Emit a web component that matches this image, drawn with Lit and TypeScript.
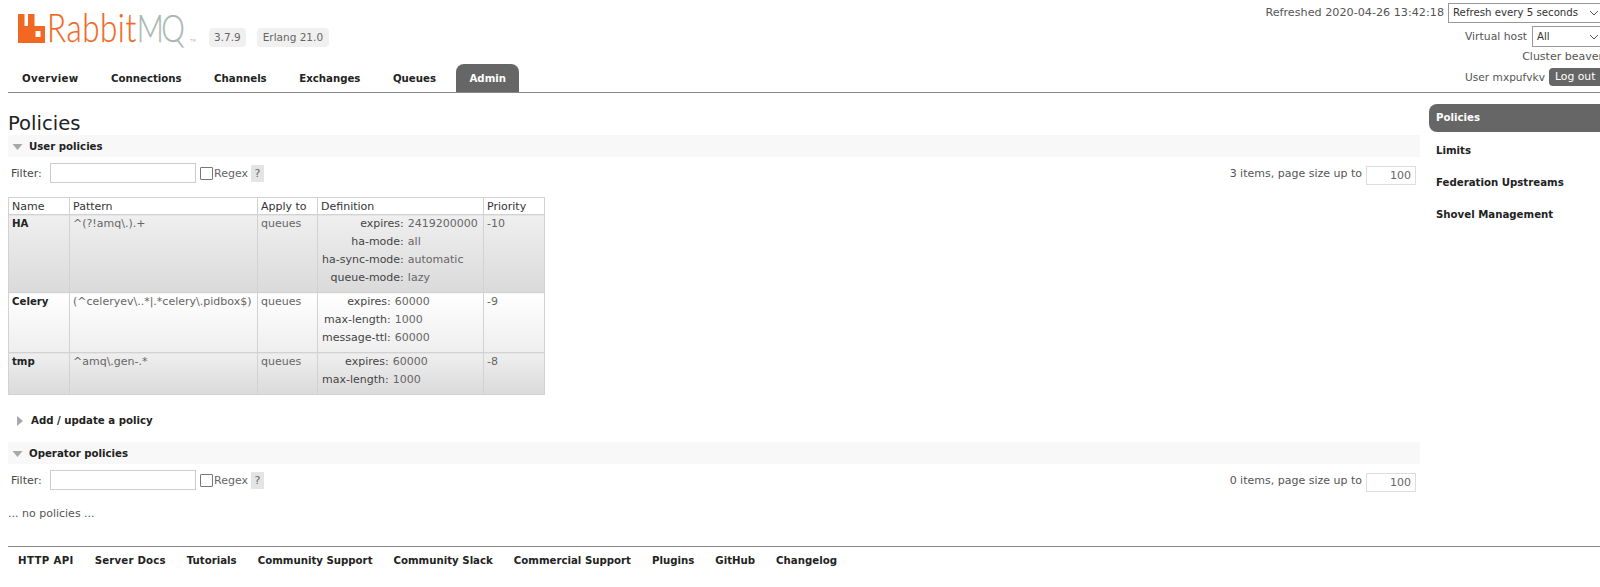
import { LitElement, html, css } from "lit";
import { customElement } from "lit/decorators.js";

const policies = [
  { name: "HA", pattern: "^(?!amq\\.).+", apply: "queues", prio: "-10", alt: "a", def: [["expires", "2419200000"], ["ha-mode", "all"], ["ha-sync-mode", "automatic"], ["queue-mode", "lazy"]] },
  { name: "Celery", pattern: "(^celeryev\\..*|.*celery\\.pidbox$)", apply: "queues", prio: "-9", alt: "b", def: [["expires", "60000"], ["max-length", "1000"], ["message-ttl", "60000"]] },
  { name: "tmp", pattern: "^amq\\.gen-.*", apply: "queues", prio: "-8", alt: "a", def: [["expires", "60000"], ["max-length", "1000"]] },
];
const tabs = ["Overview", "Connections", "Channels", "Exchanges", "Queues", "Admin"];
const side = ["Policies", "Limits", "Federation Upstreams", "Shovel Management"];
const foot = ["HTTP API", "Server Docs", "Tutorials", "Community Support", "Community Slack", "Commercial Support", "Plugins", "GitHub", "Changelog"];

@customElement("app-root")
export class AppRoot extends LitElement {
  static styles = css`
    :host { display: block; width: 1600px; height: 587px; overflow: hidden; background: #fff; color: #484848; font: 11px/18px "DejaVu Sans", Verdana, sans-serif; }
    * { box-sizing: border-box; }
    .header { height: 93px; margin-left: 8px; border-bottom: 1px solid #888; display: flex; position: relative; }
    .brand { width: 1100px; }
    .logo-row { display: flex; align-items: flex-start; height: 64px; }
    .logo { margin: 13px 0 0 10px; width: 185px; height: 30px; display: flex; align-items: flex-end; flex: none; position: relative; }
    .logo svg { display: block; width: 27px; height: 29px; flex: none; }
    .word { display: block; flex: none; margin-left: 2px; font: 300 38.500px/27px Lato, "Liberation Sans", sans-serif; white-space: nowrap; transform: scaleX(0.815); transform-origin: left center; color: #f26722; height: 29px; letter-spacing: 0.700px; -webkit-text-stroke: 0.250px #f26722; }
    .word b { font-weight: 300; font-size: 36.500px; color: #a9b7b1; letter-spacing: -3px; -webkit-text-stroke: 0.250px #a9b7b1; }
    .tm { position: absolute; left: 172px; top: 25px; font-size: 4px; line-height: 5px; color: #b5bfba; }
    .ver { margin: 28px 0 0 6px; background: #f0f0f0; border-radius: 4px; height: 19px; line-height: 19px; padding: 0 5px; color: #666; flex: none; font-size: 10.500px; }
    .ver + .ver { margin-left: 11px; padding: 0 6px; }
    .nav { display: flex; height: 28px; margin-left: 14px; font-weight: 700; font-size: 10.2px; color: #222; gap: 32.500px; }
    .nav span { line-height: 30px; height: 28px; }
    .nav span:first-child { letter-spacing: 0.350px; }
    .nav span.on { background: #666; color: #fff; border-radius: 8px 8px 0 0; margin-left: -12px; padding: 0 13px; }
    .login { margin-left: auto; margin-right: -3px; width: 366px; flex: none; display: flex; flex-direction: column; align-items: flex-end; padding-top: 3px; color: #555; }
    .login div { display: flex; align-items: center; justify-content: flex-end; white-space: nowrap; }
    .l1 { height: 20px; font-size: 11.2px; }
    .l2 { height: 21px; margin-top: 3px; font-size: 10.8px; }
    .l3 { height: 18px; margin-top: 1px; }
    .l4 { height: 18px; margin-top: 2px; font-size: 10.6px; }
    .sel { height: 100%; border: 1px solid #999; margin-left: 4px; padding-left: 4px; display: flex; align-items: center; justify-content: space-between; color: #333; background: #fff; font-size: 10.200px; }
    .sel svg { margin-right: 3px; }
    .sel.s1 { width: 155px; }
    .sel.s2 { width: 71px; margin-left: 5px; }
    .logout { background: #666; color: #fff; border-radius: 4px 0 0 4px; padding: 0 6px; height: 18px; line-height: 18px; width: 54px; margin-left: 4px; font-size: 10.8px; overflow: hidden; }
    .body { display: flex; align-items: flex-start; }
    .main { width: 1412px; margin-left: 8px; flex: none; }
    h1 { margin: 0; font-size: 19.6px; font-weight: 400; line-height: 25px; height: 42px; padding-top: 18px; color: #222; }
    .sec { height: 22px; background: #f8f8f8; display: flex; align-items: center; font-weight: 700; font-size: 10.2px; color: #222; padding-left: 4px; gap: 6px; padding-top: 1px; }
    .sec.closed { background: none; margin: 15px 0 11px; height: 21px; padding-left: 9px; gap: 8px; }
    .filter { display: flex; align-items: center; height: 21px; margin-top: 6px; padding-left: 3px; }
    .filter .lab { width: 39px; }
    .inp { width: 146px; height: 20px; border: 1px solid #ccc; background: #fff; margin-bottom: 1px; }
    .cb { width: 13px; height: 13px; border: 1px solid #777; margin-left: 4px; background: #fff; border-radius: 1px; }
    .rx { margin-left: 1px; color: #666; }
    .q { background: #e4e4e4; color: #666; width: 13px; height: 17px; line-height: 17px; text-align: center; margin-left: 3px; margin-bottom: 1px; }
    .count { margin-left: auto; color: #555; display: flex; align-items: center; }
    .size { width: 50px; height: 19px; margin: 3px 4px 0 4px; border: 1px solid #ddd; text-align: right; padding-right: 4px; line-height: 17px; color: #666; }
    table.list { border-collapse: collapse; margin-top: 13px; width: 536px; table-layout: fixed; }
    table.list > thead th { font-weight: 400; text-align: left; height: 17px; padding: 0 3px; border: 1px solid #d2d2d2; background: #fff; line-height: 15px; color: #333; }
    table.list > tbody > tr > td { border: 1px solid #d2d2d2; padding: 0 3px 5px; vertical-align: top; color: #666; }
    tr.a > td { background: linear-gradient(#efefef, #dadada); }
    tr.b > td { background: linear-gradient(#fff, #eeeeee); }
    td.nm { font-weight: 700; color: #222 !important; font-size: 10.2px; }
    table.def { border-collapse: collapse; }
    table.def th { font-weight: 400; text-align: right; padding: 0 4px 0 1px; color: #444; height: 18px; line-height: 18px; white-space: nowrap; }
    table.def td { padding: 0; color: #666; line-height: 18px; white-space: nowrap; }
    .none { margin-top: 14px; color: #555; }
    .side { width: 200px; margin-left: 9px; padding-top: 11px; flex: none; font-weight: 700; font-size: 10.2px; color: #222; }
    .side div { height: 32px; line-height: 30px; padding-left: 7px; }
    .side .on { background: #666; color: #fff; border-radius: 8px 0 0 8px; height: 28px; line-height: 28px; margin-bottom: 4px; }
    .footer { margin: 23px 0 0 8px; border-top: 1px solid #888; height: 28px; display: flex; padding-left: 10px; font-weight: 700; font-size: 10.2px; color: #222; line-height: 27px; gap: 21px; }
    .footer span:first-child { letter-spacing: 0.350px; }
    .footer span:nth-child(2) { letter-spacing: 0.200px; }
  `;

  private chevron() {
    return html`<svg width="10" height="6" viewBox="0 0 10 6"><path d="M1 1l4 4 4-4" fill="none" stroke="#555" stroke-width="1"/></svg>`;
  }

  private filter(count: string) {
    return html`<div class="filter">
      <span class="lab">Filter:</span><span class="inp"></span><span class="cb"></span><span class="rx">Regex</span><span class="q">?</span>
      <span class="count">${count}, page size up to <span class="size">100</span></span>
    </div>`;
  }

  render() {
    return html`
      <div class="header">
        <div class="brand">
          <div class="logo-row">
            <div class="logo">
              <svg viewBox="0 0 27 29"><path fill="#f26722" fill-rule="evenodd" d="M0 29V0h6.500v12h3.500V0h6.500v12H27v17z M17.500 17v6h5v-6z"/></svg>
              <span class="word">Rabbit<b>MQ</b></span>
              <span class="tm">TM</span>
            </div>
            <span class="ver">3.7.9</span><span class="ver">Erlang 21.0</span>
          </div>
          <div class="nav">${tabs.map((t) => html`<span class=${t === "Admin" ? "on" : ""}>${t}</span>`)}</div>
        </div>
        <div class="login">
          <div class="l1">Refreshed 2020-04-26 13:42:18<span class="sel s1">Refresh every 5 seconds ${this.chevron()}</span></div>
          <div class="l2">Virtual host<span class="sel s2">All ${this.chevron()}</span></div>
          <div class="l3">Cluster beaver</div>
          <div class="l4">User mxpufvkv<span class="logout">Log out</span></div>
        </div>
      </div>
      <div class="body">
        <div class="main">
          <h1>Policies</h1>
          <div class="sec"><svg width="11" height="6" viewBox="0 0 11 6"><path d="M0.500 0h10L5.500 6z" fill="#a8a8a8"/></svg>User policies</div>
          ${this.filter("3 items")}
          <table class="list">
            <colgroup><col style="width:61px"/><col style="width:188px"/><col style="width:60px"/><col style="width:166px"/><col style="width:61px"/></colgroup>
            <thead><tr><th>Name</th><th>Pattern</th><th>Apply to</th><th>Definition</th><th>Priority</th></tr></thead>
            <tbody>
              ${policies.map((p) => html`<tr class=${p.alt}>
                <td class="nm">${p.name}</td>
                <td>${p.pattern}</td>
                <td>${p.apply}</td>
                <td><table class="def">${p.def.map(([k, v]) => html`<tr><th>${k}:</th><td>${v}</td></tr>`)}</table></td>
                <td>${p.prio}</td>
              </tr>`)}
            </tbody>
          </table>
          <div class="sec closed"><svg width="6" height="10" viewBox="0 0 6 10"><path d="M0 0v10l6-5z" fill="#a8a8a8"/></svg>Add / update a policy</div>
          <div class="sec"><svg width="11" height="6" viewBox="0 0 11 6"><path d="M0.500 0h10L5.500 6z" fill="#a8a8a8"/></svg>Operator policies</div>
          ${this.filter("0 items")}
          <div class="none">... no policies ...</div>
        </div>
        <div class="side">${side.map((s, i) => html`<div class=${i === 0 ? "on" : ""}>${s}</div>`)}</div>
      </div>
      <div class="footer">${foot.map((f) => html`<span>${f}</span>`)}</div>
    `;
  }
}
